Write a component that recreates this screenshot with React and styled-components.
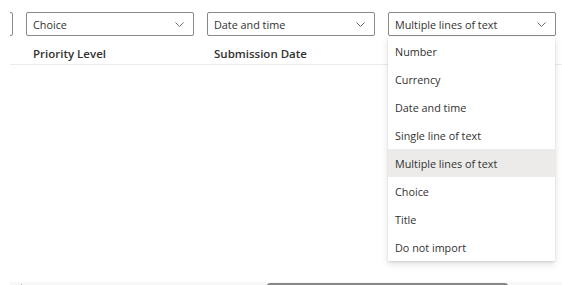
import React from 'react';
import styled, { createGlobalStyle } from 'styled-components';

const GlobalStyle = createGlobalStyle`
  html, body {
    margin: 0;
    padding: 0;
    background: #ffffff;
    overflow: hidden;
  }
  body {
    font-family: "Open Sans", "Noto Sans", "Liberation Sans", sans-serif;
    color: #323130;
  }
`;

const Page = styled.div`
  width: 562px;
  height: 285px;
  overflow: hidden;
  padding-left: 10px;
  box-sizing: border-box;
`;

const Viewport = styled.div`
  height: 282px;
  padding-top: 12px;
  box-sizing: border-box;
  overflow: hidden;
`;

const Track = styled.div`
  margin-left: -165px;
  width: 900px;
`;

const FilterRow = styled.div`
  display: flex;
  gap: 13px;
`;

const HeaderRow = styled.div`
  display: flex;
  gap: 13px;
  height: 28px;
  border-bottom: 1px solid #edebe9;
`;

const Cell = styled.div`
  position: relative;
  width: 168px;
  flex: none;
`;

const SelectBox = styled.div`
  display: flex;
  align-items: center;
  justify-content: space-between;
  height: 24px;
  box-sizing: border-box;
  padding: 0 9px 0 6px;
  border: 1px solid #8a8886;
  border-radius: 2px;
  font-size: 10.8px;
  color: #323130;
  background: #fff;
`;

const HeaderText = styled.div`
  padding: 10px 0 0 7px;
  font-size: 11.5px;
  font-weight: 600;
  color: #323130;
`;

const Menu = styled.div`
  position: absolute;
  top: calc(100% + 1px);
  left: 0;
  right: 1px;
  background: #fff;
  box-shadow: 0 3px 7px rgba(0, 0, 0, 0.13), 0 0.6px 1.8px rgba(0, 0, 0, 0.11);
  z-index: 2;
`;

const MenuItem = styled.div`
  height: 28px;
  display: flex;
  align-items: center;
  padding-left: 7px;
  font-size: 10.8px;
  color: #323130;
  background: ${p => (p.$selected ? '#edebe9' : 'transparent')};
`;

const Scrollbar = styled.div`
  height: 10px;
  background: #f8f8f8;
  display: flex;
  align-items: flex-start;
  padding-top: 1px;
  box-sizing: border-box;
`;

const ArrowLeft = styled.div`
  margin: 1px 0 0 9px;
  width: 0;
  height: 0;
  border-top: 3px solid transparent;
  border-bottom: 3px solid transparent;
  border-right: 3px solid #707070;
`;

const Thumb = styled.div`
  margin-left: 245px;
  width: 241px;
  height: 6px;
  border-radius: 3px;
  background: #868686;
`;

const Chevron = () => (
  <svg width="9" height="5" viewBox="0 0 9 5" fill="none">
    <path d="M0.5 0.5 L4.5 4.5 L8.5 0.5" stroke="#605e5c" strokeWidth="0.9" />
  </svg>
);

const columns = [
  { id: 'prev', title: '', value: '' },
  { id: 'priority', title: 'Priority Level', value: 'Choice' },
  { id: 'date', title: 'Submission Date', value: 'Date and time' },
  { id: 'notes', title: '', value: 'Multiple lines of text', open: true },
];

const options = [
  'Number',
  'Currency',
  'Date and time',
  'Single line of text',
  'Multiple lines of text',
  'Choice',
  'Title',
  'Do not import',
];

const App = () => (
  <>
    <GlobalStyle />
    <Page>
      <Viewport>
        <Track>
          <FilterRow>
            {columns.map(col => (
              <Cell key={col.id}>
                <SelectBox>
                  <span>{col.value}</span>
                  <Chevron />
                </SelectBox>
                {col.open && (
                  <Menu>
                    {options.map(opt => (
                      <MenuItem key={opt} $selected={opt === col.value}>
                        {opt}
                      </MenuItem>
                    ))}
                  </Menu>
                )}
              </Cell>
            ))}
          </FilterRow>
          <HeaderRow>
            {columns.map(col => (
              <Cell key={col.id}>
                <HeaderText>{col.title}</HeaderText>
              </Cell>
            ))}
          </HeaderRow>
        </Track>
      </Viewport>
      <Scrollbar>
        <ArrowLeft />
        <Thumb />
      </Scrollbar>
    </Page>
  </>
);

export default App;
